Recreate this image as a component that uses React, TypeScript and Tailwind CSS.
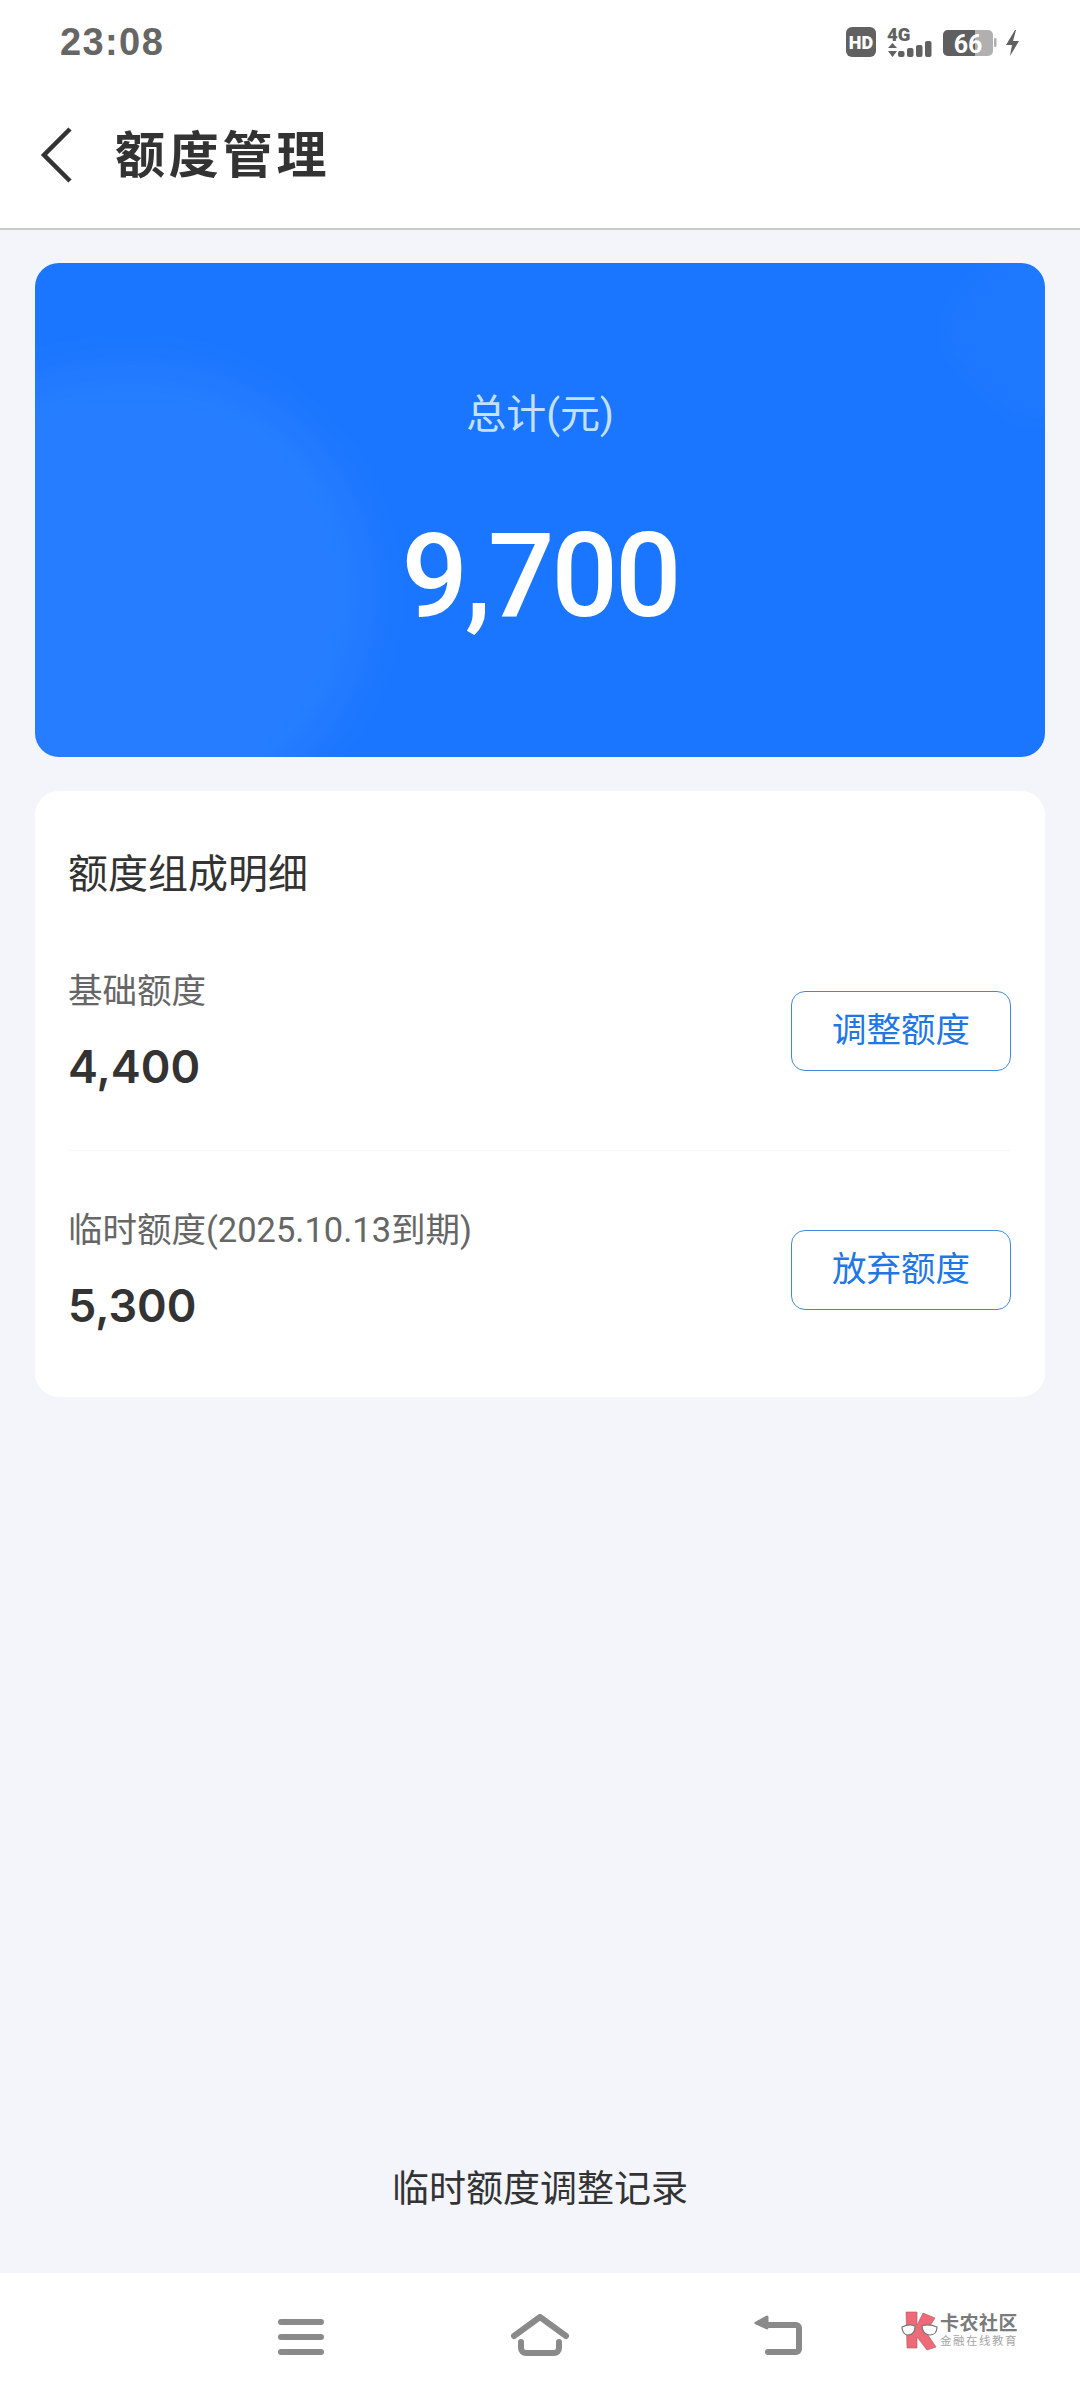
import React from "react";

const cjk = { fontFamily: '"Roboto", "Noto Sans CJK SC", sans-serif' };
const latin = { fontFamily: '"Inter", "Noto Sans CJK SC", sans-serif' };

function Row({ label, value, action, top }: { label: string; value: string; action: string; top?: boolean }) {
  return (
    <div className={"flex items-center justify-between " + (top ? "pb-[56px] border-b border-[#f6f6f8]" : "pt-[59px]")}>
      <div className="flex flex-col">
        <div className="text-[34.5px] leading-[40px] text-[#666666]">{label}</div>
        <div className="mt-[29px] text-[45px] leading-[54px] font-semibold text-[#333333]" style={latin}>{value}</div>
      </div>
      <button className="mb-[3px] flex h-[80px] w-[220px] items-center justify-center rounded-[14px] border-[1.5px] border-[#3f8ad8] bg-white text-[34.5px] text-[#1f77e6]">
        {action}
      </button>
    </div>
  );
}

function StatusIcons() {
  return (
    <svg width="190" height="40" viewBox="0 0 190 40">
      <rect x="0" y="5" width="30" height="30" rx="6" fill="#616161" />
      <text x="15" y="26.5" textAnchor="middle" fontSize="18" fontWeight="900" fill="#fff" fontFamily="Roboto, sans-serif">HD</text>
      <text x="41" y="19" fontSize="18.5" fontWeight="900" fill="#616161" fontFamily="Roboto, sans-serif">4G</text>
      <path d="M42 26l4.5-5 4.5 5zM42 29l4.5 6 4.5-6z" fill="#616161" />
      <rect x="52" y="29" width="6.5" height="6" rx="2" fill="#616161" />
      <rect x="61" y="26" width="6.5" height="9" rx="2" fill="#616161" />
      <rect x="70" y="23" width="6.5" height="12" rx="2" fill="#616161" />
      <rect x="79" y="19" width="6.5" height="16" rx="2" fill="#616161" />
      <rect x="97" y="8" width="50" height="26" rx="5" fill="#b0b0b0" />
      <path d="M102 8h27v26h-27a5 5 0 0 1-5-5v-16a5 5 0 0 1 5-5z" fill="#5f5f5f" />
      <rect x="148" y="16" width="2.5" height="9" rx="1" fill="#b0b0b0" />
      <text x="122" y="31" textAnchor="middle" fontSize="25" fontWeight="700" fill="#fff" fontFamily="Roboto, sans-serif">66</text>
      <path d="M169 8l-9 15h6l-2 11 9-15h-6l3-11z" fill="#616161" />
    </svg>
  );
}

export default function App() {
  return (
    <div className="flex h-[2400px] w-[1080px] flex-col overflow-hidden bg-[#f4f5fb]" style={cjk}>
      <header className="h-[230px] shrink-0 border-b-2 border-[#c9c9c9] bg-white">
        <div className="flex h-[84px] items-center justify-between pl-[60px] pr-[44px]">
          <span className="text-[38px] font-bold tracking-[1.4px] text-[#666666]" style={{ fontFamily: '"Liberation Sans", sans-serif' }}>23:08</span>
          <StatusIcons />
        </div>
        <div className="mt-[36px] flex h-[72px] items-center pl-[40px]">
          <svg width="34" height="56" viewBox="0 0 34 56" fill="none" className="shrink-0 -translate-y-[1px]">
            <path d="M30 2L4 28l26 26" stroke="#333333" strokeWidth="4.5" />
          </svg>
          <h1 className="ml-[41px] text-[50px] font-bold tracking-[3.8px] text-[#333333]">额度管理</h1>
        </div>
      </header>

      <main className="flex flex-1 flex-col px-[35px] pt-[33px]">
        <section className="relative flex h-[494px] flex-col items-center overflow-hidden rounded-[24px] bg-[#1a76ff]">
          <div className="absolute left-[-150px] top-[100px] h-[460px] w-[490px] rounded-full bg-[#ffffff0e] blur-[24px]" />
          <div className="absolute right-[-60px] top-[10px] h-[130px] w-[150px] rotate-45 rounded-[50px] bg-[#ffffff06] blur-[10px]" />
          <div className="relative mt-[127px] text-[40px] leading-[50px] text-[#c4e0ff]">总计(元)</div>
          <div className="relative mt-[66px] text-[117px] font-medium leading-[140px] tracking-[-3px] text-white">9,700</div>
        </section>

        <section className="mt-[34px] rounded-[24px] bg-white pl-[33px] pr-[34px] pt-[59px] pb-[64px]">
          <h2 className="text-[40px] leading-[50px] text-[#333333]">额度组成明细</h2>
          <div className="mt-[71px]">
            <Row label="基础额度" value="4,400" action="调整额度" top />
            <Row label="临时额度(2025.10.13到期)" value="5,300" action="放弃额度" />
          </div>
        </section>

        <div className="mt-auto pb-[58px] text-center text-[37px] leading-[50px] text-[#333333]">临时额度调整记录</div>
      </main>

      <nav className="relative flex h-[127px] shrink-0 items-start justify-center bg-white pt-[41px]">
        <div className="flex w-[238px] justify-center pr-[3px] pt-[3px]">
          <svg width="48" height="40" viewBox="0 0 48 40" fill="none" stroke="#8a8a8a" strokeWidth="6" strokeLinecap="round">
            <path d="M4 5h40M4 20h40M4 35h40" />
          </svg>
        </div>
        <div className="flex w-[238px] justify-center">
          <svg width="60" height="44" viewBox="0 0 60 44" fill="none" stroke="#8a8a8a" strokeWidth="6" strokeLinecap="round" strokeLinejoin="round">
            <path d="M4 22L30 3l26 19M11 28v6a5 5 0 0 0 5 5h28a5 5 0 0 0 5-5v-6" />
          </svg>
        </div>
        <div className="flex w-[238px] justify-center">
          <svg width="52" height="44" viewBox="0 0 52 44" fill="none" stroke="#8a8a8a" strokeWidth="6" strokeLinecap="round" strokeLinejoin="round">
            <path d="M14 11h30a3 3 0 0 1 3 3v21a3 3 0 0 1-3 3H16" />
            <path d="M15 3L4 9l11 5z" fill="#8a8a8a" strokeWidth="3" />
          </svg>
        </div>
        <div className="absolute left-[901px] top-[38px] flex items-center gap-[1px]">
          <svg width="38" height="40" viewBox="0 0 38 40">
            <path d="M5 1h11v13L22 2l12 5-9 14 10 15-9 3-10-13v11H6z" fill="#ee6a78" stroke="#a85a62" strokeWidth="0.6" />
            <path d="M1 16c4-2 9-3 13-1 0 5-2 9-7 9-4 0-6-4-6-8zM21 15c5-2 10-1 15 1 0 5-3 8-7 8-5 0-8-4-8-9z" fill="#fff" stroke="#777" strokeWidth="1.2" />
          </svg>
          <div className="flex flex-col">
            <span className="text-[19px] font-bold leading-[20px] tracking-[0.5px] text-[#7b7b7b]">卡农社区</span>
            <span className="text-[11.5px] leading-[14px] tracking-[1.5px] text-[#a6a6a6]">金融在线教育</span>
          </div>
        </div>
      </nav>
    </div>
  );
}
